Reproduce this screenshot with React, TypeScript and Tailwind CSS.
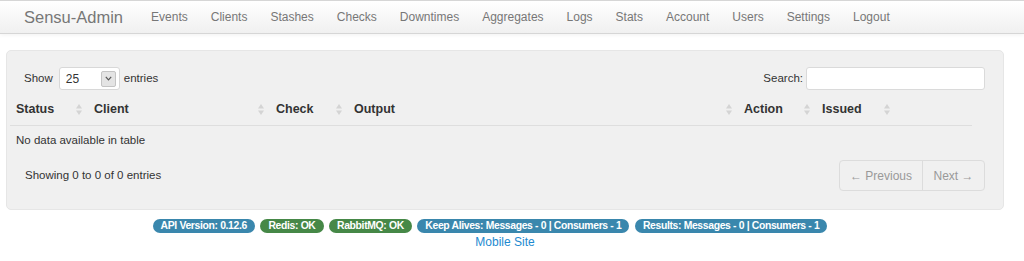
import React from 'react';

const navItems = ['Events', 'Clients', 'Stashes', 'Checks', 'Downtimes', 'Aggregates', 'Logs', 'Stats', 'Account', 'Users', 'Settings', 'Logout'];

const columns = [
  { label: 'Status', width: 'w-[78px]', sort: true },
  { label: 'Client', width: 'w-[182px]', sort: true },
  { label: 'Check', width: 'w-[78px]', sort: true },
  { label: 'Output', width: 'w-[390px]', sort: true },
  { label: 'Action', width: 'w-[78px]', sort: true },
  { label: 'Issued', width: 'w-[80px]', sort: true },
  { label: '', width: 'flex-1', sort: false },
];

const badges = [
  { text: 'API Version: 0.12.6', color: 'bg-[#3a87ad]' },
  { text: 'Redis: OK', color: 'bg-[#468847]' },
  { text: 'RabbitMQ: OK', color: 'bg-[#468847]' },
  { text: 'Keep Alives: Messages - 0 | Consumers - 1', color: 'bg-[#3a87ad]' },
  { text: 'Results: Messages - 0 | Consumers - 1', color: 'bg-[#3a87ad]' },
];

const SortIcon = () => (
  <svg width="6" height="11" viewBox="0 0 6 11" className="shrink-0">
    <polygon points="3,0 6,4.5 0,4.5" fill="#d4d4d4" />
    <polygon points="0,6.5 6,6.5 3,11" fill="#d4d4d4" />
  </svg>
);

export default function App() {
  return (
    <div className="min-h-[261px] bg-white font-['Liberation_Sans',Arial,sans-serif] text-[#333]">
      {/* navbar */}
      <nav className="h-[34px] flex items-center pl-[24px] border-y border-[#d6d6d6] bg-linear-to-b from-white to-[#f0f0f0] shadow-[0_1px_4px_rgba(0,0,0,0.06)]">
        <span className="text-[16.5px] text-[#777] mr-[28px]">Sensu-Admin</span>
        <ul className="flex gap-[23px] text-[12px] text-[#777]">
          {navItems.map((item) => (
            <li key={item}>{item}</li>
          ))}
        </ul>
      </nav>

      {/* well */}
      <div className="mt-[16px] ml-[6px] w-[998px] h-[160px] bg-[#f0f0f0] border border-[#e6e6e6] rounded-[5px] pt-[16px]">
        <div className="flex items-center justify-between pl-[17px] pr-[18px] text-[11.5px]">
          <div className="flex items-center">
            <span>Show</span>
            <div className="ml-[6px] w-[61px] h-[23px] bg-white border border-[#d8d8d8] rounded-[3px] flex items-center justify-between pl-[6px] pr-[3px]">
              <span className="text-[12px]">25</span>
              <span className="w-[15px] h-[16px] bg-[#e4e4e4] border border-[#c4c4c4] rounded-[2px] flex items-center justify-center">
                <svg width="7" height="5" viewBox="0 0 7 5">
                  <path d="M0.8 0.8 L3.5 3.8 L6.2 0.8" stroke="#555" strokeWidth="1.2" fill="none" />
                </svg>
              </span>
            </div>
            <span className="ml-[4px]">entries</span>
          </div>
          <div className="flex items-center">
            <span>Search:</span>
            <div className="ml-[3px] w-[179px] h-[23px] bg-white border border-[#dadada] rounded-[3px]" />
          </div>
        </div>

        {/* table */}
        <div className="ml-[3px] w-[962px] mt-[3px] text-[11.5px]">
          <div className="flex h-[33px] items-center border-b border-[#dedede] font-bold text-[12.5px]">
            {columns.map((c, i) => (
              <div key={i} className={`${c.width} flex items-center justify-between pl-[6px] pr-[6px]`}>
                <span>{c.label}</span>
                {c.sort && <SortIcon />}
              </div>
            ))}
          </div>
          <div className="h-[30px] flex items-center pl-[6px]">No data available in table</div>
        </div>

        <div className="mt-[4px] flex items-center justify-between pl-[18px] pr-[18px]">
          <span className="text-[11.5px]">Showing 0 to 0 of 0 entries</span>
          <div className="flex h-[31px] border border-[#dcdcdc] rounded-[4px] text-[12px] text-[#999]">
            <span className="w-[83px] flex items-center justify-center border-r border-[#dcdcdc]">← Previous</span>
            <span className="w-[61px] flex items-center justify-center">Next →</span>
          </div>
        </div>
      </div>

      {/* status badges */}
      <div className="mt-[9px] flex justify-center gap-[5.5px] pr-[44px]">
        {badges.map((b) => (
          <span key={b.text} className={`${b.color} h-[14px] px-[8px] rounded-full text-white font-bold text-[10.4px] tracking-[-0.35px] flex items-center`}>
            {b.text}
          </span>
        ))}
      </div>
      <div className="flex justify-center pr-[14px]">
        <a className="text-[12px] text-[#1e8ad0]">Mobile Site</a>
      </div>
    </div>
  );
}
